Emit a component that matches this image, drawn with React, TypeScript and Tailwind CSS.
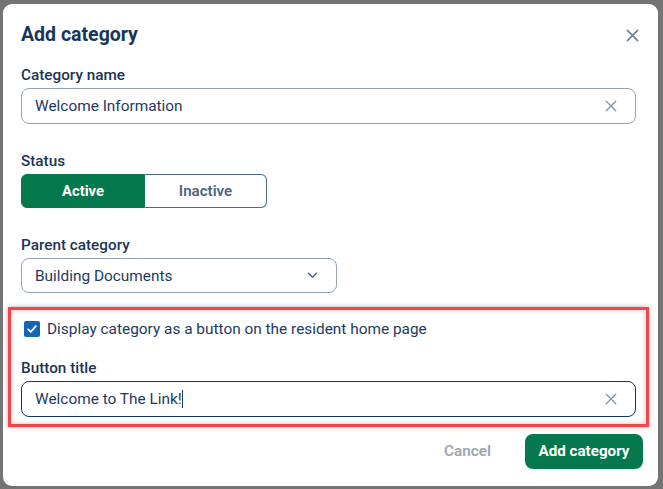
import React from "react";

const XIcon = ({ className }: { className?: string }) => (
  <svg viewBox="0 0 14 14" className={className} fill="none" stroke="currentColor" strokeWidth="1.6" strokeLinecap="round">
    <path d="M1.5 1.5 L12.5 12.5 M12.5 1.5 L1.5 12.5" />
  </svg>
);

export default function App() {
  return (
    <div className="w-[663px] h-[489px] bg-[#747474] pt-[4px] pl-[3px] overflow-hidden" style={{ fontFamily: "Roboto, 'Liberation Sans', sans-serif" }}>
      <div className="relative w-[655px] h-[482px] bg-white rounded-[9px] px-[18px] pt-[20px] text-[#1b3557]">
        <div className="flex items-center justify-between h-[22px]">
          <h1 className="text-[19.5px] font-bold leading-[22px] text-[#17365a]">Add category</h1>
          <XIcon className="w-[13px] h-[13px] mr-[1px] text-[#687d97]" />
        </div>

        <div className="mt-[19px] text-[15.3px] font-medium leading-[20px]">Category name</div>
        <div className="mt-[3px] h-[36px] w-[615px] rounded-[8px] border border-[#94a3b4] flex items-center justify-between pl-[13px] pr-[18px]">
          <span className="text-[15.4px] leading-[20px] text-[#1e3a5f]">Welcome Information</span>
          <XIcon className="w-[12px] h-[12px] text-[#8798ad]" />
        </div>

        <div className="mt-[27px] text-[15.3px] font-medium leading-[20px]">Status</div>
        <div className="mt-[3px] flex h-[34px] w-[246px]">
          <div className="w-[124px] bg-[#05794d] border border-[#05794d] rounded-l-[6px] flex items-center justify-center text-white text-[14.8px] font-bold">Active</div>
          <div className="flex-1 border border-l-0 border-[#4f6885] rounded-r-[6px] flex items-center justify-center text-[#4d6582] text-[15.1px] font-semibold">Inactive</div>
        </div>

        <div className="mt-[27px] text-[15.3px] font-medium leading-[20px]">Parent category</div>
        <div className="mt-[3px] h-[35px] w-[316px] rounded-[8px] border border-[#94a3b4] flex items-center justify-between pl-[13px] pr-[18px]">
          <span className="text-[15.4px] leading-[20px] text-[#1e3a5f]">Building Documents</span>
          <svg viewBox="0 0 12 8" className="w-[11px] h-[7px] text-[#4d6582]" fill="none" stroke="currentColor" strokeWidth="1.7" strokeLinecap="round" strokeLinejoin="round">
            <path d="M1.5 1.5 L6 6 L10.5 1.5" />
          </svg>
        </div>

        <div className="mt-[24px] flex items-center h-[24px]">
          <div className="ml-[3px] w-[16px] h-[16px] rounded-[2px] bg-[#1467b8] flex items-center justify-center">
            <svg viewBox="0 0 12 12" className="w-[12px] h-[12px]" fill="none" stroke="white" strokeWidth="1.8" strokeLinecap="round" strokeLinejoin="round">
              <path d="M2.2 6.3 L4.8 8.8 L9.8 3.2" />
            </svg>
          </div>
          <span className="ml-[7px] text-[15.4px] leading-[20px] text-[#1e3a5f]">Display category as a button on the resident home page</span>
        </div>

        <div className="mt-[17px] text-[15.3px] font-medium leading-[20px]">Button title</div>
        <div className="mt-[3px] h-[36px] w-[615px] rounded-[8px] border border-[#17365a] flex items-center justify-between pl-[13px] pr-[18px]">
          <span className="text-[15.4px] leading-[20px] text-[#1e3a5f] flex items-center">Welcome to The Link!<span className="inline-block w-[1px] h-[18px] bg-[#1e3a5f]" /></span>
          <XIcon className="w-[12px] h-[12px] text-[#8798ad]" />
        </div>

        <div className="mt-[17px] flex items-center justify-end gap-[34px]">
          <span className="text-[15.3px] font-semibold text-[#9ba5b0]">Cancel</span>
          <div className="h-[35px] w-[118px] -mr-[3px] rounded-[8px] bg-[#05794d] flex items-center justify-center text-white text-[15.2px] font-bold">Add category</div>
        </div>

        <div className="absolute left-[5px] top-[303px] w-[641px] h-[120px] border-[3px] border-[#f2474a] shadow-[0_0_5px_rgba(0,0,0,0.3),inset_0_0_5px_rgba(0,0,0,0.25)] pointer-events-none" />
      </div>
    </div>
  );
}
